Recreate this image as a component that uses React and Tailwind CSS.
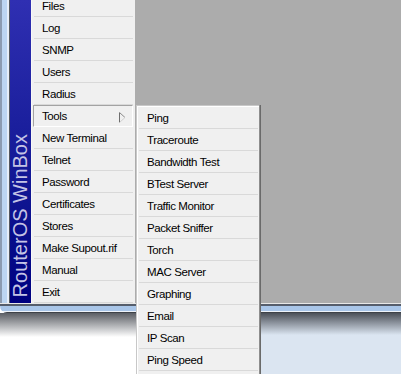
import React from "react";

const mainItems = [
  "Files", "Log", "SNMP", "Users", "Radius", "Tools", "New Terminal", "Telnet",
  "Password", "Certificates", "Stores", "Make Supout.rif", "Manual", "Exit",
];

const subItems = [
  "Ping", "Traceroute", "Bandwidth Test", "BTest Server", "Traffic Monitor",
  "Packet Sniffer", "Torch", "MAC Server", "Graphing", "Email", "IP Scan",
  "Ping Speed", "",
];

const font = { fontFamily: '"Liberation Sans", Arial, sans-serif' };

function Arrow() {
  return (
    <svg width="7" height="11" viewBox="0 0 7 11" className="block">
      <path d="M0.5 0.5 L0.5 10.5" stroke="#6e6e6e" strokeWidth="1" fill="none" />
      <path d="M0.5 0.5 L6 5.5" stroke="#8a8a8a" strokeWidth="1" fill="none" />
      <path d="M0.5 10.5 L6 5.5" stroke="#d0d0d0" strokeWidth="1" fill="none" />
    </svg>
  );
}

export default function App() {
  return (
    <div
      className="relative w-[401px] h-[374px] overflow-hidden bg-white text-[11.5px] tracking-[-0.4px] text-black"
      style={font}
    >
      <div className="flex flex-col h-full">
        {/* window */}
        <div className="flex flex-col rounded-bl-[7px] overflow-hidden">
          <div className="flex h-[303px]">
            {/* left frame */}
            <div className="w-[2px] bg-[#8c9bb0]" />
            <div className="w-[5px] bg-[#bcd5f1]" />
            <div className="w-[2px] bg-[#e6eef8]" />
            <div className="w-px bg-[#55585e]" />
            {/* sidebar */}
            <div className="relative w-[21px] bg-gradient-to-b from-[#2f2fb2] to-[#000080] flex flex-col justify-end pb-[6px]">
              <div className="[writing-mode:vertical-rl] rotate-180 text-[20px] leading-[20px] tracking-normal text-[#c4c4e6] whitespace-nowrap">
                RouterOS WinBox
              </div>
            </div>
            <div className="w-px bg-[#f8f8f8]" />
            {/* main menu */}
            <div className="w-[103px] bg-[#f0f0f0] flex flex-col mt-[-5px]">
              {mainItems.map((it) =>
                it === "Tools" ? (
                  <div
                    key={it}
                    className="h-[22px] shrink-0 ml-px mr-[2px] border border-t-[#a3a3a3] border-l-[#a3a3a3] border-b-white border-r-white flex items-center justify-between pl-[8px] pr-[6px] pt-[2px]"
                  >
                    <span>Tools</span>
                    <Arrow />
                  </div>
                ) : (
                  <div key={it} className="h-[22px] shrink-0 flex flex-col">
                    <div className="flex-1 flex items-center pl-[10px] pt-[2px]">{it}</div>
                    <div className="h-px mx-[2px] bg-[#d9d9d9]" />
                  </div>
                )
              )}
            </div>
            {/* main gray area */}
            <div className="flex-1 bg-[#acacac]" />
          </div>
          {/* bottom frame */}
          <div className="h-px bg-[#e8e8e8]" />
          <div className="h-[2px] bg-[#565e6c]" />
          <div className="h-[5px] bg-[#a9c6e9]" />
          <div className="h-px bg-[#eef3fa]" />
          <div className="h-px bg-[#3e4248]" />
        </div>
        {/* below window */}
        <div className="flex flex-1">
          <div className="w-[200px] bg-white">
            <div className="h-[24px] bg-[linear-gradient(to_bottom,rgba(50,54,62,0.8),rgba(50,54,62,0))]" />
          </div>
          <div className="flex-1 bg-[#dbe5f1]">
            <div className="h-[22px] bg-[linear-gradient(to_bottom,rgba(50,54,62,0.85),rgba(50,54,62,0))]" />
          </div>
        </div>
      </div>

      {/* Tools submenu */}
      <div className="absolute left-[136px] top-[105px] w-[125px] flex">
        <div className="flex-1 border-t border-l border-[#c8c8c8]">
          <div className="border-t border-l border-white bg-[#f0f0f0] flex flex-col">
            {subItems.map((it, i) => (
              <div key={i} className="h-[22px] shrink-0 flex flex-col">
                <div className="flex-1 flex items-center pl-[9px] pt-[2px]">{it}</div>
                <div className="h-px mx-px bg-[#d9d9d9]" />
              </div>
            ))}
          </div>
        </div>
        <div className="w-px bg-[#8e8e8e]" />
        <div className="w-px bg-[#6a6a6a]" />
      </div>
    </div>
  );
}
